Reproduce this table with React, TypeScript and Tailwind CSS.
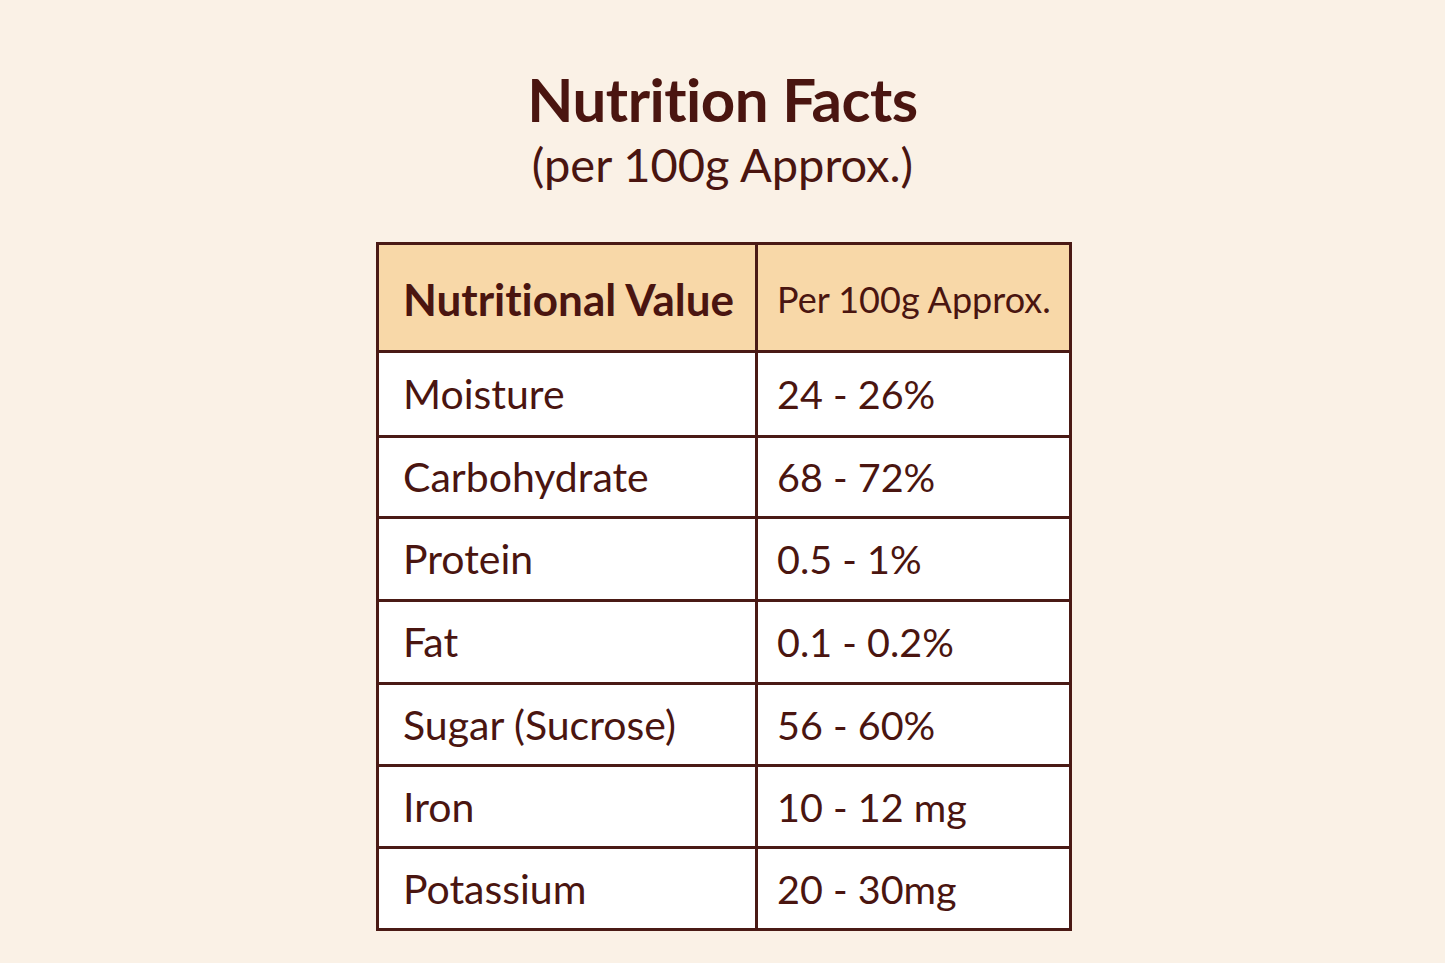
import React from "react";

const rows: [string, string, number][] = [
  ["Moisture", "24 - 26%", 85],
  ["Carbohydrate", "68 - 72%", 81],
  ["Protein", "0.5 - 1%", 83],
  ["Fat", "0.1 - 0.2%", 83],
  ["Sugar (Sucrose)", "56 - 60%", 82],
  ["Iron", "10 - 12 mg", 82],
  ["Potassium", "20 - 30mg", 82],
];

export default function App() {
  return (
    <div
      className="w-[1445px] h-[963px] bg-[#faf1e6] text-[#4a1510] flex flex-col items-center overflow-hidden [font-variant-ligatures:none]"
      style={{ fontFamily: "Lato, 'Open Sans', sans-serif" }}
    >
      <h1 className="mt-[64px] text-[60px] font-bold leading-[70px] tracking-[-0.5px]">Nutrition Facts</h1>
      <p className="mt-[2px] text-[47px] leading-[56px]">(per 100g Approx.)</p>
      <div className="mt-[50px] ml-[3px] w-[696px] border-[3px] border-[#4a1a15]">
        <div className="flex h-[108px] bg-[#f8d8a8] border-b-[3px] border-[#4a1a15]">
          <div className="w-[379px] border-r-[3px] border-[#4a1a15] flex items-center pl-[24px] pt-[2px] text-[44px] font-bold">
            Nutritional Value
          </div>
          <div className="flex-1 flex items-center pl-[19px] pt-[2px] text-[36px]">Per 100g Approx.</div>
        </div>
        {rows.map(([k, v, h], i) => (
          <div
            key={k}
            className={`flex bg-white ${i < rows.length - 1 ? "border-b-[3px] border-[#4a1a15]" : ""}`}
            style={{ height: i < rows.length - 1 ? h : h - 3 }}
          >
            <div className="w-[379px] border-r-[3px] border-[#4a1a15] flex items-center pl-[24px] text-[41px]">{k}</div>
            <div className="flex-1 flex items-center pl-[19px] text-[39.5px]">{v}</div>
          </div>
        ))}
      </div>
    </div>
  );
}
